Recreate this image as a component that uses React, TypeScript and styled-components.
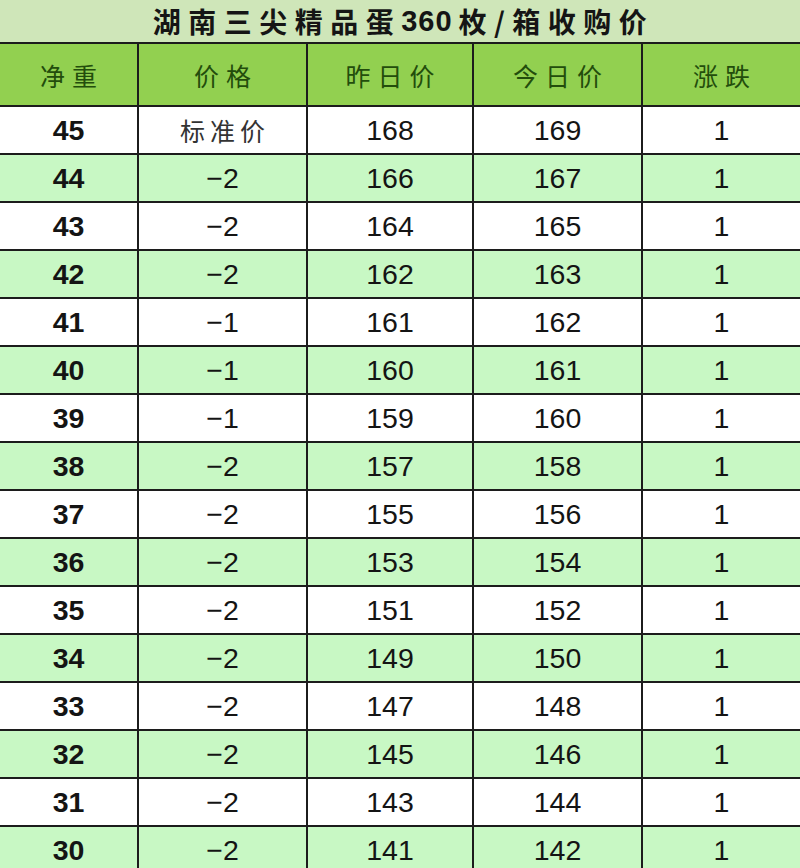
import React from "react";
import styled, { createGlobalStyle } from "styled-components";

const Global = createGlobalStyle`
  html, body { margin: 0; padding: 0; background: #ffffff; overflow: hidden; }
  body { font-family: "Liberation Sans", "Noto Sans CJK SC", sans-serif; }
`;

const Sheet = styled.div`
  width: 800px;
  height: 868px;
  overflow: hidden;
  background: #ffffff;
`;

const Title = styled.div`
  height: 42px;
  background: #cfe6b9;
  display: flex;
  align-items: center;
  justify-content: center;
  font-family: "Noto Sans CJK SC", "Liberation Sans", sans-serif;
  font-weight: 700;
  font-size: 28px;
  letter-spacing: 7.5px;
  padding-left: 7px;
  color: #151515;
`;

const TitleNum = styled.span`
  font-family: "Liberation Sans", sans-serif;
  font-weight: 700;
  font-size: 29px;
  letter-spacing: 1px;
  margin-right: 6px;
`;

const Grid = styled.div`
  display: grid;
  grid-template-columns: 137px 167px 164px 167px 157px;
  grid-template-rows: 61px;
  grid-auto-rows: 46px;
  gap: 2px;
  padding-top: 2px;
  background: #1c1c1c;
`;

const HeadCell = styled.div`
  background: #92d050;
  display: flex;
  align-items: center;
  justify-content: center;
  font-family: "Noto Sans CJK SC", sans-serif;
  font-size: 25px;
  letter-spacing: 7px;
  padding-left: 7px;
  color: #234d0c;
`;

const Cell = styled.div<{ $alt: boolean; $bold?: boolean; $cjk?: boolean }>`
  background: ${(p) => (p.$alt ? "#c8f8c4" : "#ffffff")};
  display: flex;
  align-items: center;
  justify-content: center;
  font-family: ${(p) =>
    p.$cjk ? `"Noto Sans CJK SC", sans-serif` : `"Liberation Sans", sans-serif`};
  font-size: ${(p) => (p.$cjk ? "25px" : "28.5px")};
  letter-spacing: ${(p) => (p.$cjk ? "5px" : "0")};
  padding-left: ${(p) => (p.$cjk ? "5px" : "0")};
  font-weight: ${(p) => (p.$bold ? 700 : 400)};
  color: ${(p) => (p.$cjk ? "#333333" : "#141414")};
`;

const headers = ["净重", "价格", "昨日价", "今日价", "涨跌"];

const rows: [number, string, number, number, number][] = [
  [45, "标准价", 168, 169, 1],
  [44, "−2", 166, 167, 1],
  [43, "−2", 164, 165, 1],
  [42, "−2", 162, 163, 1],
  [41, "−1", 161, 162, 1],
  [40, "−1", 160, 161, 1],
  [39, "−1", 159, 160, 1],
  [38, "−2", 157, 158, 1],
  [37, "−2", 155, 156, 1],
  [36, "−2", 153, 154, 1],
  [35, "−2", 151, 152, 1],
  [34, "−2", 149, 150, 1],
  [33, "−2", 147, 148, 1],
  [32, "−2", 145, 146, 1],
  [31, "−2", 143, 144, 1],
  [30, "−2", 141, 142, 1],
];

export default function App() {
  return (
    <>
      <Global />
      <Sheet>
        <Title>
          湖南三尖精品蛋<TitleNum>360</TitleNum>枚/箱收购价
        </Title>
        <Grid>
          {headers.map((h) => (
            <HeadCell key={h}>{h}</HeadCell>
          ))}
          {rows.map((r, i) => {
            const alt = i % 2 === 1;
            return (
              <React.Fragment key={r[0]}>
                <Cell $alt={alt} $bold>{r[0]}</Cell>
                <Cell $alt={alt} $cjk={r[1] === "标准价"}>{r[1]}</Cell>
                <Cell $alt={alt}>{r[2]}</Cell>
                <Cell $alt={alt}>{r[3]}</Cell>
                <Cell $alt={alt}>{r[4]}</Cell>
              </React.Fragment>
            );
          })}
        </Grid>
      </Sheet>
    </>
  );
}
